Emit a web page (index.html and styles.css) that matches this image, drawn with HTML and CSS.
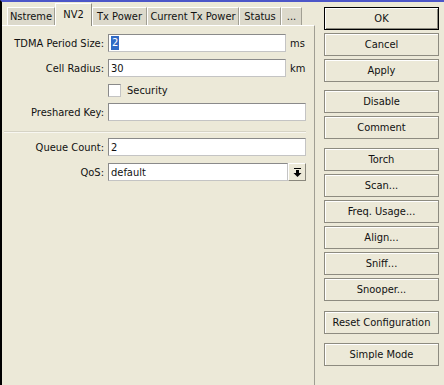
FILE: index.html
```html
<!DOCTYPE html>
<html>
<head>
<meta charset="utf-8">
<link rel="stylesheet" href="styles.css">
</head>
<body>
<div class="window">
  <div class="left">
    <div class="tabs">
      <div class="tab w-nstreme">Nstreme</div>
      <div class="tab active w-nv2">NV2</div>
      <div class="tab w-txp">Tx Power</div>
      <div class="tab w-ctxp">Current Tx Power</div>
      <div class="tab w-status">Status</div>
      <div class="tab w-more">...</div>
    </div>
    <div class="panel">
      <div class="row r-tdma">
        <label class="lbl">TDMA Period Size:</label>
        <div class="field f-short"><span class="sel">2</span></div>
        <span class="unit">ms</span>
      </div>
      <div class="row r-cell">
        <label class="lbl">Cell Radius:</label>
        <div class="field f-short">30</div>
        <span class="unit">km</span>
      </div>
      <div class="row r-check">
        <span class="lbl"></span>
        <div class="checkwrap"><span class="checkbox"></span><span class="checklbl">Security</span></div>
      </div>
      <div class="row r-psk">
        <label class="lbl">Preshared Key:</label>
        <div class="field f-long"></div>
      </div>
      <div class="sep"></div>
      <div class="row r-queue">
        <label class="lbl">Queue Count:</label>
        <div class="field f-long">2</div>
      </div>
      <div class="row r-qos">
        <label class="lbl">QoS:</label>
        <div class="field f-select">default</div>
        <div class="dropbtn">
          <svg width="9" height="9" viewBox="0 0 9 9"><rect x="1" y="0" width="7" height="1" fill="#000"/><path d="M3 2h3v3h2.5L4.5 9 0.5 5H3z" fill="#000"/></svg>
        </div>
      </div>
    </div>
  </div>
  <div class="right">
    <div class="btn default">OK</div>
    <div class="btn">Cancel</div>
    <div class="btn">Apply</div>
    <div class="btn g1">Disable</div>
    <div class="btn">Comment</div>
    <div class="btn g2">Torch</div>
    <div class="btn">Scan...</div>
    <div class="btn">Freq. Usage...</div>
    <div class="btn">Align...</div>
    <div class="btn">Sniff...</div>
    <div class="btn">Snooper...</div>
    <div class="btn g3">Reset Configuration</div>
    <div class="btn g4">Simple Mode</div>
  </div>
</div>
</body>
</html>
```

FILE: styles.css
```css
html, body {
  margin: 0;
  padding: 0;
  background: #ece9d8;
}
body {
  font-family: "DejaVu Sans Condensed", "DejaVu Sans", sans-serif;
  font-stretch: condensed;
  font-size: 11px;
  color: #111;
}
.window {
  width: 444px;
  height: 385px;
  box-sizing: border-box;
  border-top: 2px solid #4c56c8;
  border-left: 2px solid #000;
  display: flex;
  overflow: hidden;
}
.left {
  width: 313px;
  display: flex;
  flex-direction: column;
}
.tabs {
  height: 23px;
  display: flex;
  align-items: flex-end;
  padding-left: 5px;
}
.tab {
  height: 18px;
  box-sizing: border-box;
  display: flex;
  align-items: center;
  justify-content: center;
  background: #dcd9cb;
  border-top: 1px solid #fff;
  border-left: 1px solid #fff;
  border-right: 1px solid #a19f93;
  white-space: nowrap;
}
.tab.active {
  height: 23px;
  margin-bottom: -1px;
  position: relative;
  z-index: 1;
  background: #ece9d8;
  border-right-color: #8f8d82;
  padding-bottom: 2px;
}
.w-nstreme { width: 48px; }
.w-nv2 { width: 37px; }
.w-txp { width: 55px; }
.w-ctxp { width: 92px; }
.w-status { width: 42px; }
.w-more { width: 21px; }
.panel {
  flex: 1;
  border-top: 1px solid #fff;
  border-right: 1px solid #a09e93;
  padding-top: 8px;
  display: flex;
  flex-direction: column;
}
.row {
  display: flex;
  align-items: center;
  height: 18px;
}
.lbl {
  width: 102px;
  text-align: right;
  margin-right: 4px;
  white-space: nowrap;
}
.field {
  height: 18px;
  box-sizing: border-box;
  background: #fff;
  border: 1px solid;
  border-color: #8a8a8a #c4c4c4 #c4c4c4 #8a8a8a;
  display: flex;
  align-items: center;
  padding-left: 2px;
}
.f-short { width: 178px; }
.f-long { width: 198px; }
.f-select { width: 180px; }
.unit { margin-left: 4px; }
.sel {
  background: #316ac5;
  color: #fff;
  padding: 0 1px;
  line-height: 14px;
}
.r-cell { margin-top: 7px; }
.r-check { margin-top: 6px; height: 14px; }
.checkwrap { display: flex; align-items: center; }
.checkbox {
  width: 13px;
  height: 13px;
  box-sizing: border-box;
  background: #fff;
  border: 1px solid;
  border-color: #8a8a8a #c4c4c4 #c4c4c4 #8a8a8a;
}
.checklbl { margin-left: 6px; }
.r-psk { margin-top: 6px; }
.sep {
  margin-top: 10px;
  margin-left: 2px;
  width: 302px;
  height: 0;
  border-top: 1px solid #d6d3c5;
  border-bottom: 1px solid #f8f7f1;
}
.r-queue { margin-top: 5px; }
.r-qos { margin-top: 7px; }
.dropbtn {
  width: 18px;
  height: 18px;
  box-sizing: border-box;
  border: 1px solid;
  border-color: #fff #8a887d #8a887d #fff;
  display: flex;
  align-items: center;
  justify-content: center;
}
.right {
  padding-left: 9px;
  padding-top: 5px;
  display: flex;
  flex-direction: column;
  gap: 3px;
}
.btn {
  width: 115px;
  height: 23px;
  box-sizing: border-box;
  border: 1px solid #8d8b80;
  box-shadow: inset 1px 1px 0 #fff;
  display: flex;
  align-items: center;
  justify-content: center;
  white-space: nowrap;
}
.btn.default {
  border-color: #000;
  box-shadow: inset 1px 1px 0 #fff, inset -1px -1px 0 #8d8b80;
}
.g1 { margin-top: 5px; }
.g2 { margin-top: 6px; }
.g3 { margin-top: 7px; }
.g4 { margin-top: 6px; }
```
